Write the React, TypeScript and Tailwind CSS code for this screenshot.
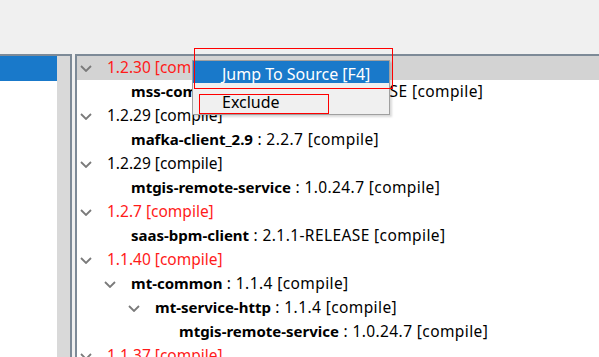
import React from 'react';

type Row = {
  level: number;
  expandable?: boolean;
  name?: string;
  label: string;
  red?: boolean;
};

const rows: Row[] = [
  { level: 0, expandable: true, label: '1.2.30 [compile]', red: true },
  { level: 1, name: 'mss-common-client', label: ' : 1.1.18-RELEASE [compile]' },
  { level: 0, expandable: true, label: '1.2.29 [compile]' },
  { level: 1, name: 'mafka-client_2.9', label: ' : 2.2.7 [compile]' },
  { level: 0, expandable: true, label: '1.2.29 [compile]' },
  { level: 1, name: 'mtgis-remote-service', label: ' : 1.0.24.7 [compile]' },
  { level: 0, expandable: true, label: '1.2.7 [compile]', red: true },
  { level: 1, name: 'saas-bpm-client', label: ' : 2.1.1-RELEASE [compile]' },
  { level: 0, expandable: true, label: '1.1.40 [compile]', red: true },
  { level: 1, expandable: true, name: 'mt-common', label: ' : 1.1.4 [compile]' },
  { level: 2, expandable: true, name: 'mt-service-http', label: ' : 1.1.4 [compile]' },
  { level: 3, name: 'mtgis-remote-service', label: ' : 1.0.24.7 [compile]' },
  { level: 0, expandable: true, label: '1.1.37 [compile]', red: true },
];

const indent = ['pl-0', 'pl-6', 'pl-12', 'pl-18'];

const Chevron = () => (
  <svg width="12" height="7" viewBox="0 0 12 7" className="ml-[3px]">
    <path d="M1 1l5 5 5-5" fill="none" stroke="#7a7a7a" strokeWidth="1.8" />
  </svg>
);

const App: React.FC = () => {
  return (
    <div
      className="relative w-[599px] h-[357px] overflow-hidden bg-[#f0f0f0] text-[15.5px] text-black"
      style={{ fontFamily: '"Noto Sans", "Noto Sans CJK SC", sans-serif' }}
    >
      {/* top toolbar area */}
      <div className="h-[54px]" />

      <div className="flex h-[303px]">
        {/* left list */}
        <div className="flex w-[72px] border-t-2 border-r-2 border-[#7d8a97]">
          <div className="w-[57px] bg-white">
            <div className="h-[25px] bg-[#1979ca]" />
          </div>
          <div className="w-[13px] bg-[#d9d9d9]" />
        </div>
        <div className="w-[3px]" />

        {/* dependency tree */}
        <div className="flex-1 border-t-2 border-l-2 border-[#7d8a97] bg-white">
          {rows.map((r, i) => (
            <div
              key={i}
              className={`flex items-center h-[24px] whitespace-nowrap ${indent[r.level]} ${
                i === 0 ? 'bg-[#d3d3d3]' : ''
              }`}
            >
              <div className="w-[30px] flex items-center">{r.expandable && <Chevron />}</div>
              <span className={r.red ? 'text-[#ff1a1a]' : ''}>
                {r.name && <span className="font-bold text-[15px]">{r.name}</span>}
                {r.name ? <span className="tracking-[0.4px]">{r.label}</span> : r.label}
              </span>
            </div>
          ))}
        </div>
      </div>

      {/* context menu */}
      <div className="absolute left-[192px] top-[60px] w-[198px] border border-[#a0a0a0] bg-[#f0f0f0] text-[16px] shadow-[2px_2px_2px_rgba(0,0,0,0.15)]">
        <div className="h-[22px] flex items-center bg-[#1979ca] text-white pl-[29px] pt-[3px]">Jump To Source [F4]</div>
        <div className="h-[31px] flex items-center pl-[29px] pt-[6px]">Exclude</div>
      </div>

      {/* annotation boxes */}
      <div className="absolute left-[194px] top-[48px] w-[199px] h-[41px] border border-[#ff0000]" />
      <div className="absolute left-[199px] top-[94px] w-[130px] h-[20px] border border-[#ff0000]" />
    </div>
  );
};

export default App;
